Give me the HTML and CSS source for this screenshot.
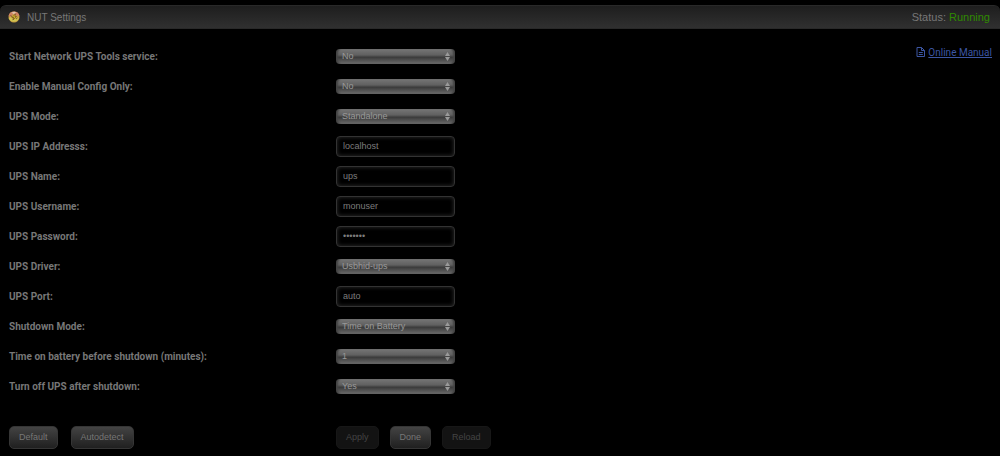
FILE: index.html
```html
<!DOCTYPE html>
<html lang="en">
<head>
<meta charset="utf-8">
<title>NUT Settings</title>
<link rel="stylesheet" href="styles.css">
</head>
<body>
<header class="title-bar">
  <h1 class="title">
    <svg class="logo" viewBox="0 0 12 12" aria-hidden="true">
      <circle cx="6" cy="6" r="5.5" fill="#c9a040"/>
      <path d="M.6 5a5.500 5.500 0 0 1 10.800 0L8 4.500 5 3 2.500 6z" fill="#cf8264"/>
      <path d="M.6 7l2.400-1 2 3 4-2 2-.5a5.500 5.500 0 0 1-10.400.5z" fill="#d0c552"/>
      <path d="M3.500 1.500l3-.8 2 1L5.500 3z" fill="#dfc4ac"/>
      <path d="M7.500 2.800L4 6.500h2L4.800 9 8.500 5.500H6.800z" fill="#e8c92f" stroke="#4a3214" stroke-width=".5"/>
      <path d="M2.500 4.500l1.500 1M8 8l1.500-1" stroke="#6b4524" stroke-width=".8"/>
    </svg>
    NUT Settings
  </h1>
  <div class="status">Status: <span class="running">Running</span></div>
</header>
<main class="panel">
  <form class="settings">
    <div class="row">
      <label for="service">Start Network UPS Tools service:</label>
      <div class="control"><select id="service"><option>No</option></select>
        <a class="manual" href="#manual"><svg class="doc" viewBox="0 0 9 10" aria-hidden="true"><path d="M1 .5h4.500l3 3v6H1zM5.500 .5v3h3M2.800 5.500h4M2.800 7.500h4" fill="none" stroke="currentColor"/></svg><span class="link-text">Online Manual</span></a></div>
    </div>
    <div class="row"><label for="manual-config">Enable Manual Config Only:</label><div class="control"><select id="manual-config"><option>No</option></select></div></div>
    <div class="row"><label for="mode">UPS Mode:</label><div class="control"><select id="mode"><option>Standalone</option></select></div></div>
    <div class="row"><label for="ip">UPS IP Addresss:</label><div class="control"><input id="ip" type="text" value="localhost"></div></div>
    <div class="row"><label for="name">UPS Name:</label><div class="control"><input id="name" type="text" value="ups"></div></div>
    <div class="row"><label for="user">UPS Username:</label><div class="control"><input id="user" type="text" value="monuser"></div></div>
    <div class="row"><label for="pass">UPS Password:</label><div class="control"><input id="pass" type="password" value="monpass"></div></div>
    <div class="row"><label for="driver">UPS Driver:</label><div class="control"><select id="driver"><option>Usbhid-ups</option></select></div></div>
    <div class="row"><label for="port">UPS Port:</label><div class="control"><input id="port" type="text" value="auto"></div></div>
    <div class="row"><label for="shutdown">Shutdown Mode:</label><div class="control"><select id="shutdown"><option>Time on Battery</option></select></div></div>
    <div class="row"><label for="minutes">Time on battery before shutdown (minutes):</label><div class="control"><select id="minutes"><option>1</option></select></div></div>
    <div class="row"><label for="turn-off">Turn off UPS after shutdown:</label><div class="control"><select id="turn-off"><option>Yes</option></select></div></div>
    <div class="row actions">
      <div class="buttons buttons-left"><button type="button">Default</button><button type="button">Autodetect</button></div>
      <div class="buttons"><button type="submit" disabled>Apply</button><button type="button">Done</button><button type="reset" disabled>Reload</button></div>
    </div>
  </form>
</main>
</body>
</html>
```
FILE: styles.css
```css
* { box-sizing: border-box; }
body {
  margin: 0;
  padding-top: 5px;
  background: #000;
  color: #777;
  font: 10px "Liberation Sans", Arial, sans-serif;
}
.title-bar {
  display: flex;
  align-items: center;
  justify-content: space-between;
  height: 24px;
  padding: 0 10px 0 8px;
  border: 1px solid #292929;
  border-width: 1px 0;
  border-radius: 6px 6px 0 0;
  background: linear-gradient(#1e1e1e, #303030);
}
.title {
  display: flex;
  align-items: center;
  gap: 7px;
  margin: 0;
  font-size: 10px;
  font-weight: normal;
}
.logo { width: 12px; height: 12px; }
.status { font-size: 11px; }
.running { color: #2f8a00; }
.panel { padding: 12px 8px; }
.row {
  display: grid;
  grid-template-columns: 1fr 2fr;
  align-items: center;
  height: 30px;
}
label {
  padding-left: 1px;
  font-family: Roboto, "Liberation Sans", sans-serif;
  font-weight: bold;
}
.control {
  display: flex;
  align-items: center;
  justify-content: space-between;
}
select, input {
  width: 119px;
  margin: 0;
  color: #7c7c7c;
  font: 9px "Liberation Sans", Arial, sans-serif;
}
select {
  height: 15px;
  padding: 0 6px;
  appearance: none;
  border: 0;
  border-radius: 4px;
  background:
    url("data:image/svg+xml,%3Csvg xmlns='http://www.w3.org/2000/svg' width='5' height='9'%3E%3Cpath d='M0 4L2.500 0 5 4zM0 5L2.500 9 5 5z' fill='%239a9a9a'/%3E%3C/svg%3E") right 5px center / 5px 9px no-repeat,
    linear-gradient(#767676, #606060 40%, #3b3b3b 55%, #6c6c6c);
  box-shadow: inset 3px 0 2px -1px #444, inset -3px 0 2px -1px #444;
  color: #989898;
}
input {
  height: 21px;
  padding: 0 6px;
  border: 1px solid #333;
  border-radius: 4px;
  background: #000;
  box-shadow: inset 0 0 4px #303030;
}
.manual {
  display: flex;
  align-items: center;
  gap: 3px;
  margin-bottom: 8px;
  color: #3c56a4;
  font-family: Roboto, "Liberation Sans", sans-serif;
  text-decoration: none;
}
.link-text { text-decoration: underline; }
.doc { width: 9px; height: 10px; }
.actions { margin-top: 21px; }
.buttons { display: flex; gap: 11px; }
.buttons-left { gap: 13px; padding-left: 1px; }
button {
  height: 23px;
  padding: 0 9px;
  border: 1px solid #353535;
  border-radius: 5px;
  background: linear-gradient(#434343, #202020);
  color: #777;
  font: 9px "Liberation Sans", Arial, sans-serif;
}
button:disabled {
  border-color: #171717;
  background: #131313;
  color: #444;
}
```
